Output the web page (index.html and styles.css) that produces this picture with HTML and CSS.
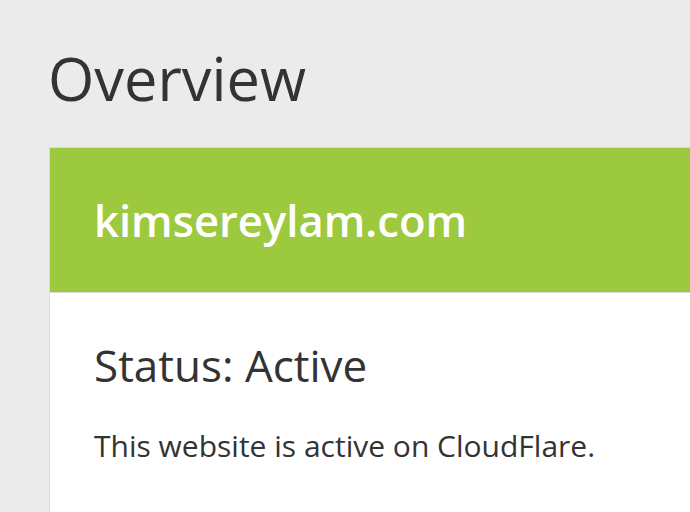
FILE: index.html
```html
<!DOCTYPE html>
<html>
<head>
<meta charset="utf-8">
<link rel="stylesheet" href="styles.css">
</head>
<body>
<main class="page">
  <h1 class="title">Overview</h1>
  <section class="card">
    <header class="card-head">
      <h2 class="domain">kimsereylam.com</h2>
    </header>
    <div class="card-body">
      <h3 class="status">Status: Active</h3>
      <p class="desc">This website is active on CloudFlare.</p>
    </div>
  </section>
</main>
</body>
</html>
```

FILE: styles.css
```css
html, body {
  margin: 0;
  padding: 0;
  background: #ebebeb;
  font-family: "Open Sans", sans-serif;
  color: #333;
  overflow: hidden;
}
.page {
  padding: 40px 0 0 49px;
}
.title {
  margin: 0 0 31px -1px;
  font-size: 59.5px;
  font-weight: 400;
  line-height: 76px;
}
.card {
  width: 641px;
  background: #fff;
  border: 1px solid #dcdcdc;
  border-right: none;
}
.card-head {
  background: #9dc93f;
  height: 144px;
  display: flex;
  align-items: center;
  padding: 0 44px;
  border-bottom: 1px solid #dcdcdc;
}
.domain {
  margin: 0;
  color: #fff;
  font-size: 43.6px;
  font-weight: 600;
}
.card-body {
  padding: 44px 44px 60px;
}
.status {
  margin: 0 0 33px;
  font-size: 44px;
  font-weight: 400;
  line-height: 56px;
}
.desc {
  margin: 0;
  font-size: 30px;
  line-height: 40px;
}
```
